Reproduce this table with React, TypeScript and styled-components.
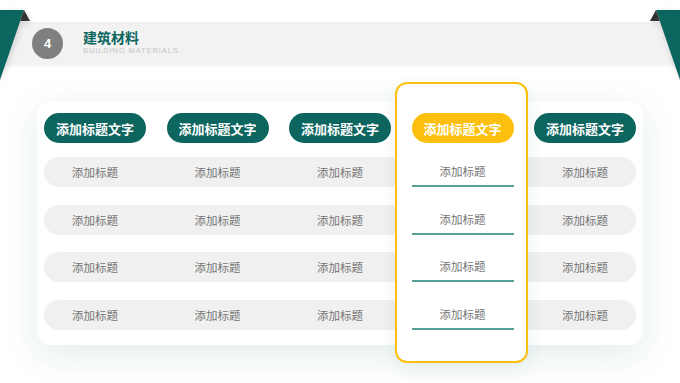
import styled, { createGlobalStyle } from 'styled-components';

const GlobalStyle = createGlobalStyle`
    html, body {
        margin: 0;
        padding: 0;
        background: #ffffff;
        font-family: 'Noto Sans CJK SC', 'Noto Sans', sans-serif;
    }
`;

const TEAL = '#0c655f';
const YELLOW = '#fcbf0d';

const Page = styled.div`
    position: relative;
    width: 680px;
    height: 383px;
    overflow: hidden;
    padding-top: 22px;
    box-sizing: border-box;
`;

const Corner = styled.svg<{ $side: 'left' | 'right' }>`
    position: absolute;
    top: 0;
    ${(p) => (p.$side === 'left' ? 'left: 0;' : 'right: 0;')}
    z-index: 3;
    filter: drop-shadow(1px 2px 3px rgba(0, 0, 0, 0.15));
`;

const Band = styled.div`
    height: 43px;
    background: #f2f2f2;
    display: flex;
    align-items: center;
    padding-left: 32px;
    gap: 20px;
    box-shadow: 0 2px 4px rgba(0, 0, 0, 0.03);
`;

const Badge = styled.div`
    width: 31px;
    height: 31px;
    border-radius: 50%;
    background: #7f7f7f;
    color: #fff;
    font-family: 'Liberation Sans', sans-serif;
    font-weight: 700;
    font-size: 13px;
    display: flex;
    align-items: center;
    justify-content: center;
`;

const TitleBlock = styled.div`
    display: flex;
    flex-direction: column;
    margin-top: -4px;
`;

const Title = styled.div`
    color: ${TEAL};
    font-size: 14px;
    font-weight: 700;
    line-height: 18px;
`;

const Subtitle = styled.div`
    color: #c4c4c4;
    font-family: 'Liberation Sans', sans-serif;
    font-size: 7.5px;
    letter-spacing: 0.9px;
    line-height: 9px;
`;

const Card = styled.div`
    position: relative;
    margin: 36px 37px 0;
    height: 244px;
    box-sizing: border-box;
    padding: 12px 7px 0;
    background: #fff;
    border-radius: 14px;
    box-shadow: 0 10px 36px rgba(20, 100, 100, 0.12);
    display: flex;
    flex-direction: column;
    gap: 17.5px;
`;

const Highlight = styled.div`
    position: absolute;
    left: 358px;
    top: -19px;
    bottom: -18px;
    width: 133px;
    box-sizing: border-box;
    border: 2px solid ${YELLOW};
    border-radius: 12px;
    background: #fff;
    z-index: 1;
    box-shadow: 0 6px 18px rgba(20, 90, 90, 0.08);
`;

const Grid = styled.div`
    display: grid;
    grid-template-columns: repeat(5, 102px);
    column-gap: 20.5px;
`;

const Heads = styled(Grid)`
    margin-bottom: -3.5px;
`;

const Pill = styled.div<{ $active?: boolean }>`
    position: relative;
    z-index: 2;
    height: 30px;
    border-radius: 15px;
    background: ${(p) => (p.$active ? YELLOW : TEAL)};
    color: #fff;
    font-size: 13px;
    font-weight: 700;
    display: flex;
    align-items: center;
    justify-content: center;
`;

const Row = styled(Grid)`
    height: 30px;
    border-radius: 15px;
    background: #f0f0f0;
`;

const Cell = styled.div<{ $active?: boolean }>`
    position: relative;
    z-index: 2;
    display: flex;
    align-items: center;
    justify-content: center;
    font-size: 11.5px;
    color: #747474;
    box-sizing: border-box;
    border-bottom: ${(p) => (p.$active ? '2px solid #55a097' : 'none')};
`;

const COLS = 5;
const ACTIVE = 3;

const App = () => {
    return (
        <>
            <GlobalStyle />
            <Page>
                <Corner $side="left" width="34" height="84" viewBox="0 0 34 84">
                    <polygon points="0,10 24,10 0,80" fill={TEAL} />
                    <polygon points="24,10 30,21 20.3,21" fill="#333" />
                </Corner>
                <Corner $side="right" width="34" height="84" viewBox="0 0 34 84">
                    <polygon points="10,10 34,10 34,80" fill={TEAL} />
                    <polygon points="10,10 4,21 13.7,21" fill="#333" />
                </Corner>
                <Band>
                    <Badge>4</Badge>
                    <TitleBlock>
                        <Title>建筑材料</Title>
                        <Subtitle>BUILDING MATERIALS</Subtitle>
                    </TitleBlock>
                </Band>
                <Card>
                    <Highlight />
                    <Heads>
                        {Array.from({ length: COLS }).map((_, i) => (
                            <Pill key={i} $active={i === ACTIVE}>
                                添加标题文字
                            </Pill>
                        ))}
                    </Heads>
                    {Array.from({ length: 4 }).map((_, r) => (
                        <Row key={r}>
                            {Array.from({ length: COLS }).map((_, i) => (
                                <Cell key={i} $active={i === ACTIVE}>
                                    添加标题
                                </Cell>
                            ))}
                        </Row>
                    ))}
                </Card>
            </Page>
        </>
    );
};

export default App;
